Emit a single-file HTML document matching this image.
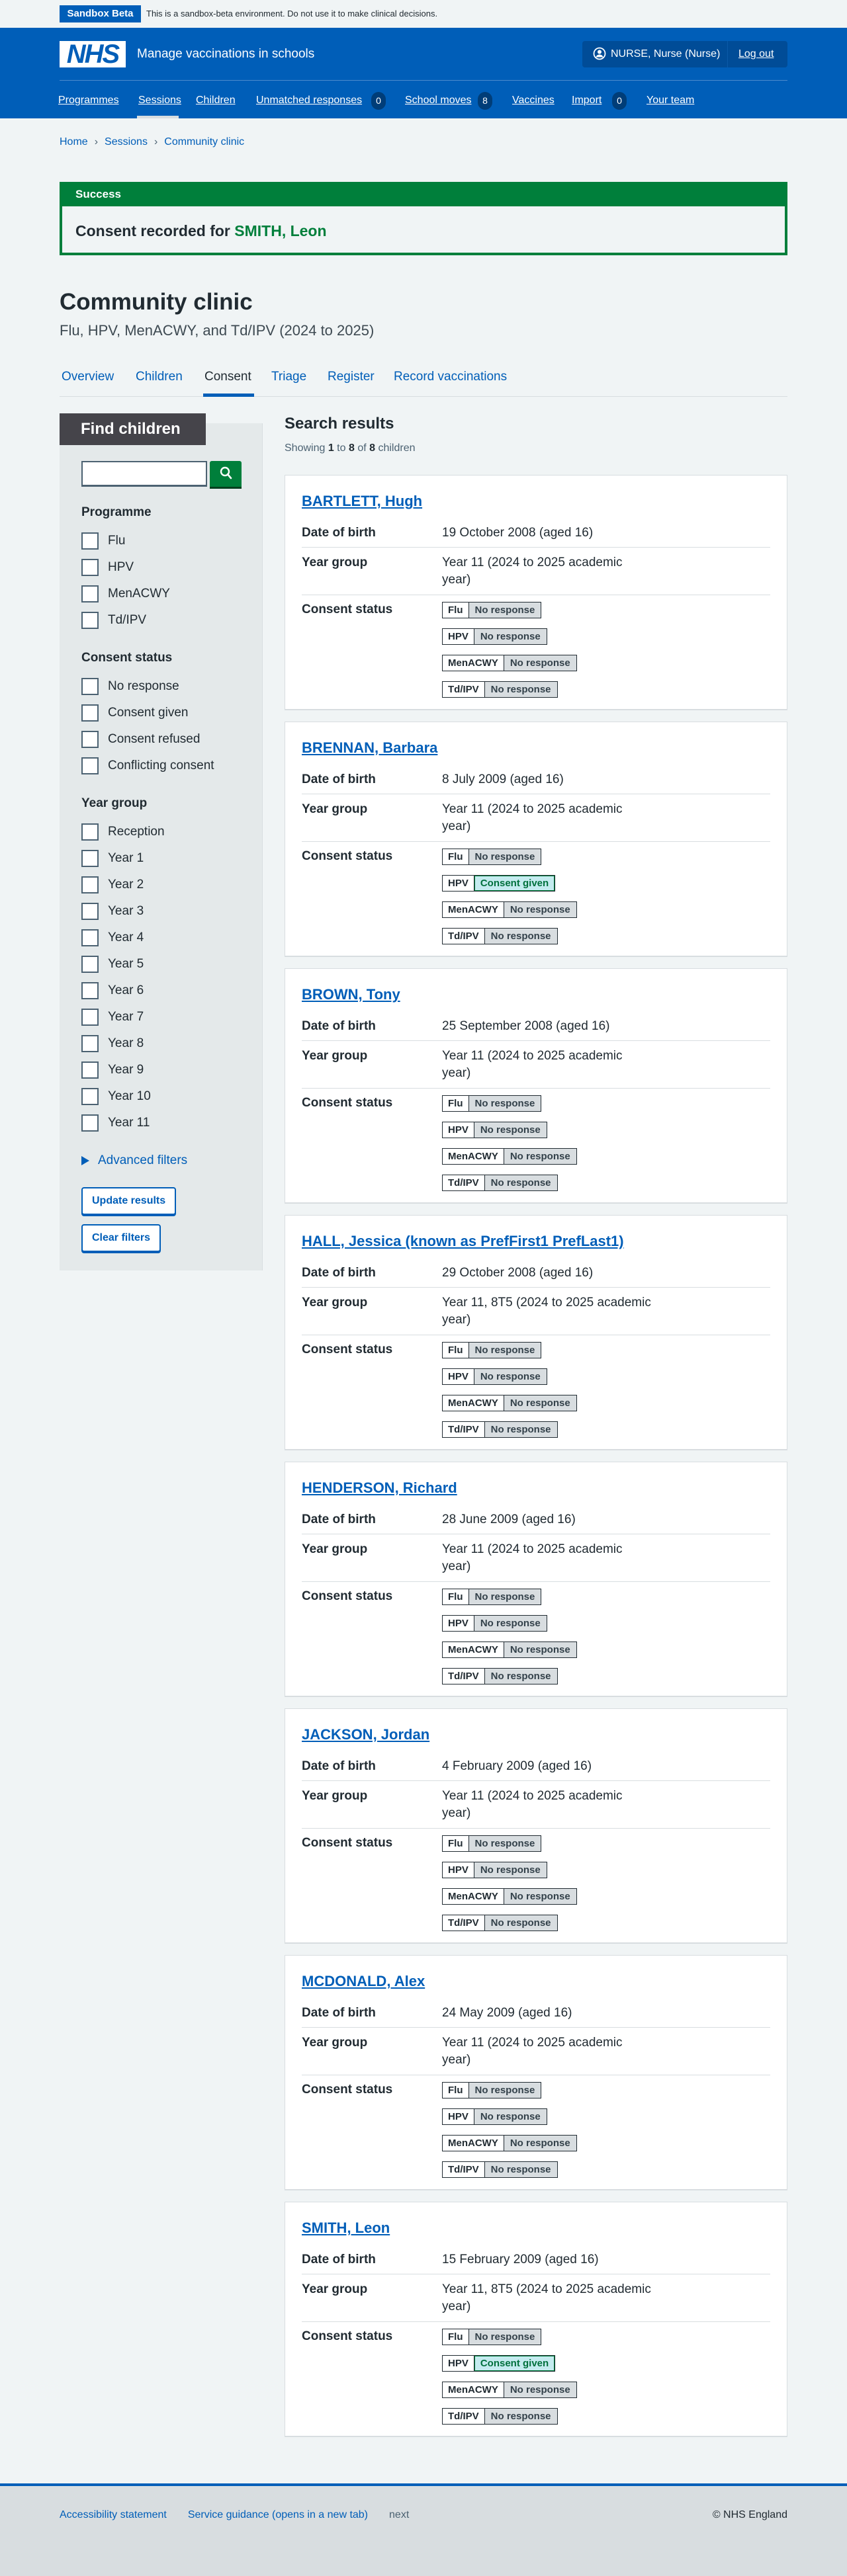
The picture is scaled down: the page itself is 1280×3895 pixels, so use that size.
<!DOCTYPE html>
<html><head><meta charset="utf-8">
<style>
*{box-sizing:border-box;margin:0;padding:0}
body{width:1280px;height:3895px;background:#f0f4f5;font-family:"Liberation Sans",Arial,sans-serif;color:#212b32;position:relative;overflow:hidden}
.abs{position:absolute}
a{color:#005eb8}
.hdr{position:absolute;left:0;top:42px;width:1280px;height:137px;background:#005eb8}
.nav a{position:absolute;top:141px;color:#fff;font-size:16px;line-height:22px;text-decoration:underline;white-space:nowrap}
.nb{position:absolute;top:139px;height:27px;width:22px;border-radius:12px;background:#003d78;color:#fff;font-size:14px;line-height:27px;text-align:center}
.cb{position:absolute;left:123px;width:26px;height:26px;border:2px solid #4c6272;background:#fff}
.cl{position:absolute;left:163px;font-size:19px;line-height:26px;white-space:nowrap}
.sh{position:absolute;left:123px;font-size:19px;font-weight:bold;line-height:26px}
.card{position:absolute;left:430px;width:760px;height:356px;background:#fff;border:1px solid #d8dde0;border-bottom:2px solid #d8dde0;padding:23px 25px 0 25px}
.card h3{font-size:22px;line-height:32px;font-weight:bold}
.card h3 a{color:#005eb8;text-decoration:underline}
.row{display:flex;border-bottom:1px solid #d8dde0;font-size:19px}
.row .k{width:212px;font-weight:bold}
.row .v{width:360px;white-space:nowrap}
.r1{margin-top:8px;padding:12px 0 10px;line-height:24px;height:46px}
.r2{padding:10px 0 10px;line-height:26px;height:72px}
.r3{border-bottom:none;padding-top:10px;line-height:24px}
.tag{display:flex;height:25px;margin-bottom:15px;font-size:15px;font-weight:bold;line-height:23px;width:max-content;border:1px solid #212b32}
.tag .p{background:#fff;padding:0 8px;border-right:1px solid #212b32}
.tag .s{background:#d8dde0;padding:0 9px;color:#33414a}
.tag.g .s{background:#c4ebef;color:#00703c;outline:1px solid #007f3b;outline-offset:-1px}
.btn{position:absolute;left:123px;height:42px;border:2px solid #005eb8;border-radius:4px;background:#fff;color:#005eb8;font-weight:bold;font-size:16px;line-height:38px;padding:0 14px;box-shadow:0 2px 0 #005eb8}
</style></head><body>

<div class="abs" style="left:90px;top:8px;width:123px;height:26px;background:#005eb8;color:#fff;font-weight:bold;font-size:15px;line-height:26px;text-align:center">Sandbox Beta</div>
<div class="abs" style="left:221px;top:8px;font-size:13px;line-height:26px">This is a sandbox-beta environment. Do not use it to make clinical decisions.</div>

<div class="hdr"></div>
<div class="abs" style="left:90px;top:62px;width:100px;height:40px;background:#fff;color:#005eb8;font-weight:bold;font-style:italic;font-size:40px;line-height:40px;text-align:center;letter-spacing:-2px">NHS</div>
<div class="abs" style="left:207px;top:70px;color:#fff;font-size:19px;line-height:24px">Manage vaccinations in schools</div>
<div class="abs" style="left:880px;top:62px;width:310px;height:40px;background:#004c97;border-radius:4px"></div>
<div class="abs" style="left:1099px;top:62px;width:1px;height:40px;background:#0b5aa8"></div>
<svg class="abs" style="left:896px;top:71px" width="20" height="20" viewBox="0 0 20 20"><circle cx="10" cy="10" r="8.5" fill="none" stroke="#fff" stroke-width="1.8"/><circle cx="10" cy="7.5" r="3" fill="#fff"/><path d="M4.5 15.5c1-3 3-4 5.5-4s4.5 1 5.5 4" fill="#fff"/></svg>
<div class="abs" style="left:923px;top:71px;color:#fff;font-size:16px;line-height:22px">NURSE, Nurse (Nurse)</div>
<div class="abs" style="left:1116px;top:71px;color:#fff;font-size:16px;line-height:22px;text-decoration:underline">Log out</div>
<div class="abs" style="left:90px;top:121px;width:1100px;height:1px;background:#4c8bcc"></div>
<div class="nav">
<a style="left:88px">Programmes</a>
<a style="left:209px">Sessions</a>
<a style="left:296px">Children</a>
<a style="left:387px">Unmatched responses</a><span class="nb" style="left:561px">0</span>
<a style="left:612px">School moves</a><span class="nb" style="left:722px">8</span>
<a style="left:774px">Vaccines</a>
<a style="left:864px">Import</a><span class="nb" style="left:925px">0</span>
<a style="left:977px">Your team</a>
</div>
<div class="abs" style="left:207px;top:175px;width:63px;height:4px;background:#d8dde0"></div>

<div class="abs" style="left:90px;top:204px;font-size:16px;line-height:22px;white-space:nowrap"><a>Home</a><span style="color:#4c6272;margin:0 10px">›</span><a>Sessions</a><span style="color:#4c6272;margin:0 10px">›</span><a>Community clinic</a></div>

<div class="abs" style="left:90px;top:275px;width:1100px;height:111px;border:4px solid #007f3b;background:#f0f4f5"></div>
<div class="abs" style="left:90px;top:275px;width:1100px;height:37px;background:#007f3b;color:#fff;font-weight:bold;font-size:17px;line-height:37px;padding-left:24px">Success</div>
<div class="abs" style="left:114px;top:334px;font-size:23px;font-weight:bold;line-height:30px">Consent recorded for <a style="color:#007f3b">SMITH, Leon</a></div>

<div class="abs" style="left:90px;top:436px;font-size:35px;font-weight:bold;line-height:42px">Community clinic</div>
<div class="abs" style="left:90px;top:486px;font-size:22px;line-height:28px;color:#3e4a52">Flu, HPV, MenACWY, and Td/IPV (2024 to 2025)</div>

<div class="abs" style="left:90px;top:599px;width:1100px;height:1px;background:#d8dde0"></div>
<div class="abs" style="left:93px;top:558px;font-size:19px;line-height:24px;white-space:nowrap;color:#005eb8">
<span style="position:absolute;left:0">Overview</span><span style="position:absolute;left:112px">Children</span><span style="position:absolute;left:216px;color:#212b32">Consent</span><span style="position:absolute;left:317px">Triage</span><span style="position:absolute;left:402px">Register</span><span style="position:absolute;left:502px">Record vaccinations</span></div>
<div class="abs" style="left:307px;top:595px;width:77px;height:5px;background:#005eb8"></div>

<div class="abs" style="left:90px;top:640px;width:307px;height:1281px;background:#e4e9ea;border-right:1px solid #d8dde0"></div>
<div class="abs" style="left:90px;top:625px;width:221px;height:48px;background:#45444a;color:#fff;font-size:24px;font-weight:bold;line-height:48px;padding-left:32px">Find children</div>
<div class="abs" style="left:123px;top:697px;width:190px;height:39px;background:#fff;border:2px solid #4c6272;border-bottom-width:3px"></div>
<div class="abs" style="left:317px;top:697px;width:48px;height:39px;background:#007f3b;border-radius:3px 3px 0 0;box-shadow:0 3px 0 #00401e"></div>
<svg class="abs" style="left:331px;top:705px" width="20" height="22" viewBox="0 0 20 22"><circle cx="9" cy="8" r="6" fill="none" stroke="#fff" stroke-width="2.4"/><path d="M13 12l5 6" stroke="#fff" stroke-width="2.6" stroke-linecap="round"/></svg>

<div class="sh" style="top:762px">Programme</div>
<div class="cb" style="top:805px"></div><div class="cl" style="top:805px">Flu</div>
<div class="cb" style="top:845px"></div><div class="cl" style="top:845px">HPV</div>
<div class="cb" style="top:885px"></div><div class="cl" style="top:885px">MenACWY</div>
<div class="cb" style="top:925px"></div><div class="cl" style="top:925px">Td/IPV</div>
<div class="sh" style="top:982px">Consent status</div>
<div class="cb" style="top:1025px"></div><div class="cl" style="top:1025px">No response</div>
<div class="cb" style="top:1065px"></div><div class="cl" style="top:1065px">Consent given</div>
<div class="cb" style="top:1105px"></div><div class="cl" style="top:1105px">Consent refused</div>
<div class="cb" style="top:1145px"></div><div class="cl" style="top:1145px">Conflicting consent</div>
<div class="sh" style="top:1202px">Year group</div>
<div class="cb" style="top:1245px"></div><div class="cl" style="top:1245px">Reception</div>
<div class="cb" style="top:1285px"></div><div class="cl" style="top:1285px">Year 1</div>
<div class="cb" style="top:1325px"></div><div class="cl" style="top:1325px">Year 2</div>
<div class="cb" style="top:1365px"></div><div class="cl" style="top:1365px">Year 3</div>
<div class="cb" style="top:1405px"></div><div class="cl" style="top:1405px">Year 4</div>
<div class="cb" style="top:1445px"></div><div class="cl" style="top:1445px">Year 5</div>
<div class="cb" style="top:1485px"></div><div class="cl" style="top:1485px">Year 6</div>
<div class="cb" style="top:1525px"></div><div class="cl" style="top:1525px">Year 7</div>
<div class="cb" style="top:1565px"></div><div class="cl" style="top:1565px">Year 8</div>
<div class="cb" style="top:1605px"></div><div class="cl" style="top:1605px">Year 9</div>
<div class="cb" style="top:1645px"></div><div class="cl" style="top:1645px">Year 10</div>
<div class="cb" style="top:1685px"></div><div class="cl" style="top:1685px">Year 11</div>
<svg class="abs" style="left:123px;top:1748px" width="12" height="14" viewBox="0 0 12 14"><path d="M0 0L12 7L0 14Z" fill="#005eb8"/></svg>
<a class="abs" style="left:148px;top:1742px;font-size:19px;line-height:26px">Advanced filters</a>
<div class="btn" style="top:1795px">Update results</div>
<div class="btn" style="top:1851px">Clear filters</div>

<div class="abs" style="left:430px;top:626px;font-size:24px;font-weight:bold;line-height:30px">Search results</div>
<div class="abs" style="left:430px;top:667px;font-size:16px;line-height:22px;color:#4c6272">Showing <b style="color:#212b32">1</b> to <b style="color:#212b32">8</b> of <b style="color:#212b32">8</b> children</div>

<div class="card" style="top:718px"><h3><a>BARTLETT, Hugh</a></h3>
<div class="row r1"><div class="k">Date of birth</div><div class="v">19 October 2008 (aged 16)</div></div>
<div class="row r2"><div class="k">Year group</div><div class="v">Year 11 (2024 to 2025 academic<br>year)</div></div>
<div class="row r3"><div class="k">Consent status</div><div>
<div class="tag"><span class="p">Flu</span><span class="s">No response</span></div>
<div class="tag"><span class="p">HPV</span><span class="s">No response</span></div>
<div class="tag"><span class="p">MenACWY</span><span class="s">No response</span></div>
<div class="tag"><span class="p">Td/IPV</span><span class="s">No response</span></div></div></div></div>

<div class="card" style="top:1091px"><h3><a>BRENNAN, Barbara</a></h3>
<div class="row r1"><div class="k">Date of birth</div><div class="v">8 July 2009 (aged 16)</div></div>
<div class="row r2"><div class="k">Year group</div><div class="v">Year 11 (2024 to 2025 academic<br>year)</div></div>
<div class="row r3"><div class="k">Consent status</div><div>
<div class="tag"><span class="p">Flu</span><span class="s">No response</span></div>
<div class="tag g"><span class="p">HPV</span><span class="s">Consent given</span></div>
<div class="tag"><span class="p">MenACWY</span><span class="s">No response</span></div>
<div class="tag"><span class="p">Td/IPV</span><span class="s">No response</span></div></div></div></div>

<div class="card" style="top:1464px"><h3><a>BROWN, Tony</a></h3>
<div class="row r1"><div class="k">Date of birth</div><div class="v">25 September 2008 (aged 16)</div></div>
<div class="row r2"><div class="k">Year group</div><div class="v">Year 11 (2024 to 2025 academic<br>year)</div></div>
<div class="row r3"><div class="k">Consent status</div><div>
<div class="tag"><span class="p">Flu</span><span class="s">No response</span></div>
<div class="tag"><span class="p">HPV</span><span class="s">No response</span></div>
<div class="tag"><span class="p">MenACWY</span><span class="s">No response</span></div>
<div class="tag"><span class="p">Td/IPV</span><span class="s">No response</span></div></div></div></div>

<div class="card" style="top:1837px"><h3><a>HALL, Jessica (known as PrefFirst1 PrefLast1)</a></h3>
<div class="row r1"><div class="k">Date of birth</div><div class="v">29 October 2008 (aged 16)</div></div>
<div class="row r2"><div class="k">Year group</div><div class="v">Year 11, 8T5 (2024 to 2025 academic<br>year)</div></div>
<div class="row r3"><div class="k">Consent status</div><div>
<div class="tag"><span class="p">Flu</span><span class="s">No response</span></div>
<div class="tag"><span class="p">HPV</span><span class="s">No response</span></div>
<div class="tag"><span class="p">MenACWY</span><span class="s">No response</span></div>
<div class="tag"><span class="p">Td/IPV</span><span class="s">No response</span></div></div></div></div>

<div class="card" style="top:2210px"><h3><a>HENDERSON, Richard</a></h3>
<div class="row r1"><div class="k">Date of birth</div><div class="v">28 June 2009 (aged 16)</div></div>
<div class="row r2"><div class="k">Year group</div><div class="v">Year 11 (2024 to 2025 academic<br>year)</div></div>
<div class="row r3"><div class="k">Consent status</div><div>
<div class="tag"><span class="p">Flu</span><span class="s">No response</span></div>
<div class="tag"><span class="p">HPV</span><span class="s">No response</span></div>
<div class="tag"><span class="p">MenACWY</span><span class="s">No response</span></div>
<div class="tag"><span class="p">Td/IPV</span><span class="s">No response</span></div></div></div></div>

<div class="card" style="top:2583px"><h3><a>JACKSON, Jordan</a></h3>
<div class="row r1"><div class="k">Date of birth</div><div class="v">4 February 2009 (aged 16)</div></div>
<div class="row r2"><div class="k">Year group</div><div class="v">Year 11 (2024 to 2025 academic<br>year)</div></div>
<div class="row r3"><div class="k">Consent status</div><div>
<div class="tag"><span class="p">Flu</span><span class="s">No response</span></div>
<div class="tag"><span class="p">HPV</span><span class="s">No response</span></div>
<div class="tag"><span class="p">MenACWY</span><span class="s">No response</span></div>
<div class="tag"><span class="p">Td/IPV</span><span class="s">No response</span></div></div></div></div>

<div class="card" style="top:2956px"><h3><a>MCDONALD, Alex</a></h3>
<div class="row r1"><div class="k">Date of birth</div><div class="v">24 May 2009 (aged 16)</div></div>
<div class="row r2"><div class="k">Year group</div><div class="v">Year 11 (2024 to 2025 academic<br>year)</div></div>
<div class="row r3"><div class="k">Consent status</div><div>
<div class="tag"><span class="p">Flu</span><span class="s">No response</span></div>
<div class="tag"><span class="p">HPV</span><span class="s">No response</span></div>
<div class="tag"><span class="p">MenACWY</span><span class="s">No response</span></div>
<div class="tag"><span class="p">Td/IPV</span><span class="s">No response</span></div></div></div></div>

<div class="card" style="top:3329px"><h3><a>SMITH, Leon</a></h3>
<div class="row r1"><div class="k">Date of birth</div><div class="v">15 February 2009 (aged 16)</div></div>
<div class="row r2"><div class="k">Year group</div><div class="v">Year 11, 8T5 (2024 to 2025 academic<br>year)</div></div>
<div class="row r3"><div class="k">Consent status</div><div>
<div class="tag"><span class="p">Flu</span><span class="s">No response</span></div>
<div class="tag g"><span class="p">HPV</span><span class="s">Consent given</span></div>
<div class="tag"><span class="p">MenACWY</span><span class="s">No response</span></div>
<div class="tag"><span class="p">Td/IPV</span><span class="s">No response</span></div></div></div></div>

<div class="abs" style="left:0;top:3755px;width:1280px;height:140px;background:#d8dde0;border-top:4px solid #005eb8"></div>
<div class="abs" style="left:90px;top:3792px;font-size:16px;line-height:22px;white-space:nowrap"><a>Accessibility statement</a><a style="margin-left:32px">Service guidance (opens in a new tab)</a><span style="margin-left:32px;color:#4c6272">next</span></div>
<div class="abs" style="right:90px;top:3792px;font-size:16px;line-height:22px">© NHS England</div>
</body></html>
